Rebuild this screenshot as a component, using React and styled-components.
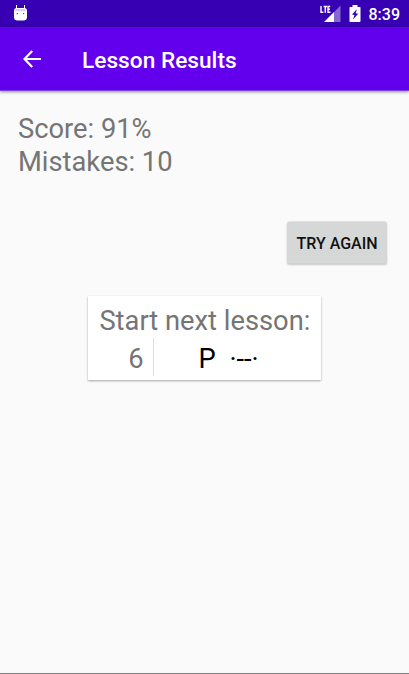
import React from "react";
import styled, { createGlobalStyle } from "styled-components";

const GlobalStyle = createGlobalStyle`
  * { box-sizing: border-box; }
  body { margin: 0; background: #fafafa; font-family: Roboto, "Liberation Sans", sans-serif; }
`;

const Screen = styled.div`
  display: flex;
  flex-direction: column;
  height: 674px;
  width: 409px;
  overflow: hidden;
  background: #fafafa;
  border-bottom: 1px solid #808080;
`;

const StatusBar = styled.header`
  display: flex;
  align-items: flex-start;
  flex: none;
  height: 27px;
  padding: 5px 9px 0 14px;
  background: #3700b3;
  color: #fff;
`;

const StatusIcons = styled.div`
  display: flex;
  margin-left: auto;
  gap: 8px;
`;

const Clock = styled.time`
  margin-left: 7.6px;
  font-size: 16px;
  font-weight: 500;
  line-height: 19px;
`;

const AppBar = styled.nav`
  display: flex;
  align-items: center;
  flex: none;
  height: 64px;
  padding: 2px 23px 0;
  background: #6200ee;
  color: #fff;
  border-bottom: 1px solid #7a3fe0;
  box-shadow: 0 1px 3px rgba(0, 0, 0, 0.45);
`;

const BackButton = styled.button`
  display: flex;
  margin-bottom: 2px;
  padding: 0;
  border: 0;
  background: none;
  color: inherit;
`;

const Title = styled.h1`
  margin: 3px 0 0 41px;
  font-size: 22.7px;
  font-weight: 500;
  line-height: 28px;
`;

const Content = styled.main`
  display: flex;
  flex-direction: column;
  padding: 22px 22px 0 18px;
`;

const Stat = styled.p`
  margin: 0;
  font-size: 27.3px;
  line-height: 32.5px;
  color: #757575;
`;

const RetryButton = styled.button`
  align-self: flex-end;
  width: 99px;
  height: 42px;
  margin: 44px 0 32px;
  padding: 1px 0 0;
  border: 0;
  border-radius: 2px;
  background: #d6d7d7;
  color: #111;
  font: 500 16px/19px Roboto, sans-serif;
  box-shadow: 0 1px 2px rgba(0, 0, 0, 0.2);
  transform: translate(-0.5px, -0.5px);
`;

const LessonCard = styled.section`
  width: 233px;
  height: 84px;
  margin-left: 70px;
  padding: 9px 0 0;
  background: #fff;
  box-shadow: 0 1px 2px rgba(0, 0, 0, 0.35);
`;

const CardHeading = styled.h2`
  margin: 0 0 0 11.4px;
  font-size: 27.3px;
  font-weight: 400;
  line-height: 33px;
  color: #757575;
  white-space: nowrap;
`;

const LessonRow = styled.div`
  display: flex;
  height: 38px;
  font-size: 27.3px;
  line-height: 43px;
`;

const LessonNumber = styled.span`
  width: 66px;
  padding-right: 9.5px;
  border-right: 1px solid #dedede;
  text-align: right;
  color: #757575;
`;

const Letter = styled.span`
  width: 31px;
  margin-left: 44.4px;
  color: #000;
`;

const Morse = styled.span`
  color: #000;
`;

function DroidIcon() {
  return (
    <svg width="13" height="16" viewBox="0 0 13 16">
      <path d="M2.5 0V4M10.5 0V4" stroke="#fff" strokeWidth="1" />
      <path d="M0 6Q0 3 2.8 3H10.2Q13 3 13 6V12Q13 15.5 9.5 15.5H3.5Q0 15.5 0 12Z" fill="#fff" />
      <path d="M1.8 4H11.2L12 6.3H1Z" fill="#d9cff2" />
      <circle cx="3.3" cy="8.6" r="0.7" fill="#3700b3" />
      <circle cx="9.7" cy="8.6" r="0.7" fill="#3700b3" />
    </svg>
  );
}

function SignalIcon() {
  return (
    <svg width="21" height="17" viewBox="0 0 21 17">
      <path d="M14 7.2 20.5 0.5V17H14Z" fill="#8766d1" />
      <path d="M4 17 14 7V17Z" fill="#fff" />
      <path d="M1 1V7.2H3.4M3.6 1.5H7M5.3 1.5V7.7M10.2 1.5H8V7.2H10.4M8 4.3H10" fill="none" stroke="#fff" strokeWidth="1.4" />
    </svg>
  );
}

function BatteryIcon() {
  return (
    <svg width="12" height="17" viewBox="0 0 12 17">
      <path d="M1 2H3.5V0H8.5V2H11Q11.5 2 11.5 2.8V16Q11.5 17 10.7 17H1.2Q0.5 17 0.5 16V2.8Q0.5 2 1 2Z" fill="#fff" />
      <path d="M8 4 3 9.5 5.5 10 4 14.5 9.2 8.8 6.6 8.3Z" fill="#3700b3" />
    </svg>
  );
}

function BackIcon() {
  return (
    <svg width="18" height="18" viewBox="0 0 18 18" fill="none" stroke="#fff" strokeWidth="2.2">
      <path d="M18 9H2M9.2 0.9 1.5 9 9.2 17.1" />
    </svg>
  );
}

export default function App() {
  return (
    <>
      <GlobalStyle />
      <Screen>
        <StatusBar>
          <DroidIcon />
          <StatusIcons>
            <SignalIcon />
            <BatteryIcon />
          </StatusIcons>
          <Clock>8:39</Clock>
        </StatusBar>
        <AppBar>
          <BackButton aria-label="Back">
            <BackIcon />
          </BackButton>
          <Title>Lesson Results</Title>
        </AppBar>
        <Content>
          <Stat>Score: 91%</Stat>
          <Stat>Mistakes: 10</Stat>
          <RetryButton>TRY AGAIN</RetryButton>
          <LessonCard>
            <CardHeading>Start next lesson:</CardHeading>
            <LessonRow>
              <LessonNumber>6</LessonNumber>
              <Letter>P</Letter>
              <Morse>·--·</Morse>
            </LessonRow>
          </LessonCard>
        </Content>
      </Screen>
    </>
  );
}
